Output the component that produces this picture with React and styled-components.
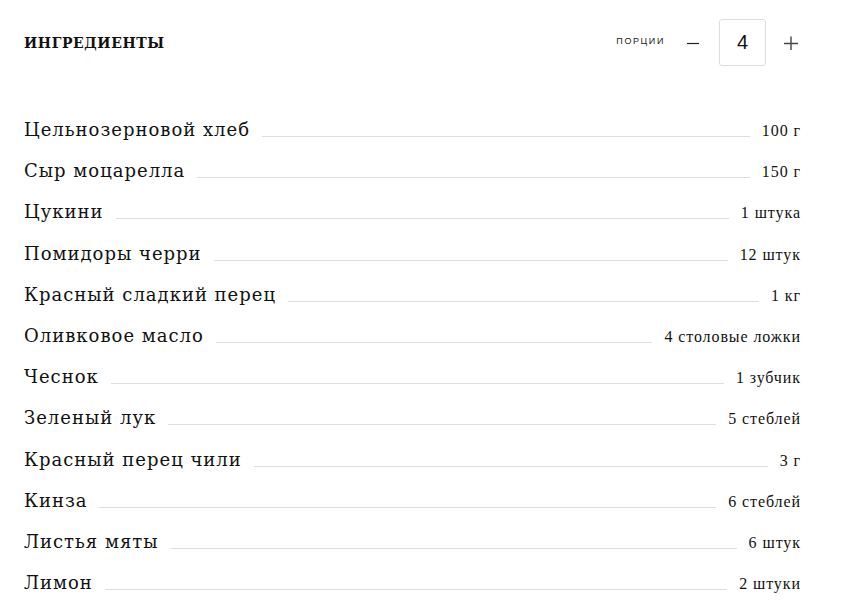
import React, { useState } from 'react';
import styled, { createGlobalStyle } from 'styled-components';

const GlobalStyle = createGlobalStyle`
  html, body {
    margin: 0;
    padding: 0;
    background: #fff;
  }
`;

const ingredients = [
  { name: 'Цельнозерновой хлеб', amount: '100 г' },
  { name: 'Сыр моцарелла', amount: '150 г' },
  { name: 'Цукини', amount: '1 штука' },
  { name: 'Помидоры черри', amount: '12 штук' },
  { name: 'Красный сладкий перец', amount: '1 кг' },
  { name: 'Оливковое масло', amount: '4 столовые ложки' },
  { name: 'Чеснок', amount: '1 зубчик' },
  { name: 'Зеленый лук', amount: '5 стеблей' },
  { name: 'Красный перец чили', amount: '3 г' },
  { name: 'Кинза', amount: '6 стеблей' },
  { name: 'Листья мяты', amount: '6 штук' },
  { name: 'Лимон', amount: '2 штуки' }
];

const Wrapper = styled.div`
  padding: 19px 52px 0 24px;
  color: #111;
`;

const Header = styled.div`
  display: flex;
  align-items: center;
  justify-content: space-between;
  height: 47px;
`;

const Title = styled.h2`
  margin: 0;
  font-family: 'DejaVu Serif', serif;
  font-weight: 700;
  font-size: 14px;
  letter-spacing: 0.6px;
`;

const Servings = styled.div`
  display: flex;
  align-items: center;
`;

const ServingsLabel = styled.span`
  font-family: 'Liberation Sans', Arial, sans-serif;
  font-size: 9px;
  letter-spacing: 1.6px;
  color: #222;
  margin-right: 22px;
  margin-top: -4px;
`;

const StepButton = styled.button`
  border: 0;
  background: none;
  padding: 0;
  display: flex;
  align-items: center;
  justify-content: center;
  cursor: pointer;
  margin: ${p => p.$margin};
`;

const CountBox = styled.div`
  width: 45px;
  height: 45px;
  border: 1px solid #ddd;
  border-radius: 3px;
  display: flex;
  align-items: center;
  justify-content: center;
  font-family: 'Liberation Sans', Arial, sans-serif;
  font-size: 20px;
  color: #111;
`;

const List = styled.ul`
  list-style: none;
  margin: 0;
  padding: 0;
  padding-top: 53px;
`;

const Row = styled.li`
  display: flex;
  align-items: baseline;
  height: 41.2px;
`;

const Name = styled.span`
  font-family: 'DejaVu Serif', serif;
  font-size: 18px;
  letter-spacing: 1px;
  white-space: nowrap;
`;

const Leader = styled.span`
  flex: 1;
  border-bottom: 1px solid #ddd;
  margin: 0 12px;
  position: relative;
  top: 1px;
`;

const Amount = styled.span`
  font-family: 'Liberation Serif', 'Times New Roman', serif;
  font-size: 16px;
  letter-spacing: 0.9px;
  margin-right: -0.9px;
  white-space: nowrap;
`;

const Minus = () => (
  <svg width="12" height="14" viewBox="0 0 12 14">
    <path d="M0 7.5h12" stroke="#222" strokeWidth="1.2" />
  </svg>
);

const Plus = () => (
  <svg width="14" height="14" viewBox="0 0 14 14">
    <path d="M0 7.5h14M7 0.5v14" stroke="#444" strokeWidth="1.4" />
  </svg>
);

export default function App() {
  const [count, setCount] = useState(4);
  return (
    <Wrapper>
      <GlobalStyle />
      <Header>
        <Title>ИНГРЕДИЕНТЫ</Title>
        <Servings>
          <ServingsLabel>ПОРЦИИ</ServingsLabel>
          <StepButton $margin="0 20px 0 0" onClick={() => setCount(c => Math.max(1, c - 1))}>
            <Minus />
          </StepButton>
          <CountBox>{count}</CountBox>
          <StepButton $margin="0 2px 0 18px" onClick={() => setCount(c => c + 1)}>
            <Plus />
          </StepButton>
        </Servings>
      </Header>
      <List>
        {ingredients.map(item => (
          <Row key={item.name}>
            <Name>{item.name}</Name>
            <Leader />
            <Amount>{item.amount}</Amount>
          </Row>
        ))}
      </List>
    </Wrapper>
  );
}
